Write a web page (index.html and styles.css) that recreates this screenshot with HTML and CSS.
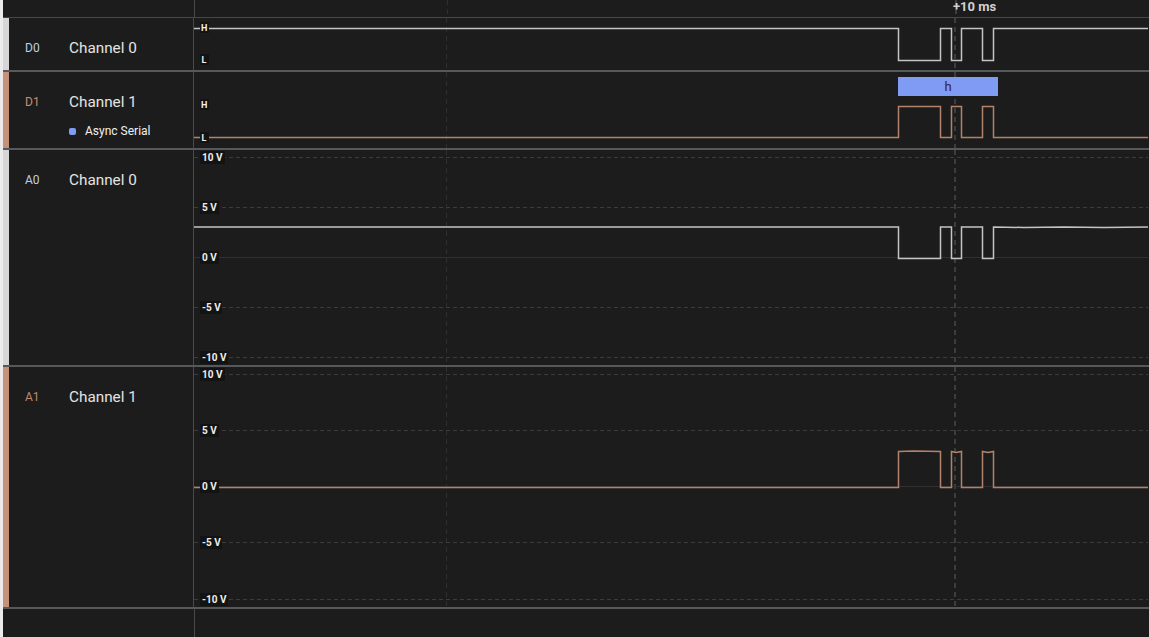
FILE: index.html
```html
<!DOCTYPE html>
<html>
<head>
<meta charset="utf-8">
<link rel="stylesheet" href="styles.css">
</head>
<body>
<div class="app">
  <div class="header">
    <div class="header-left"></div>
    <div class="plot">
      <svg class="svg" width="954" height="17" viewBox="0 0 954 17">
        <line class="vgrid" x1="252.5" y1="0" x2="252.5" y2="17"/>
        <line class="cursor" x1="761" y1="0" x2="761" y2="17"/>
        <text class="timelabel" x="779.5" y="11">+10 ms</text>
      </svg>
    </div>
  </div>

  <div class="row row-d0">
    <div class="accent accent-gray"></div>
    <div class="label">
      <div class="id id-blue">D0</div>
      <div class="names"><div class="name">Channel 0</div></div>
    </div>
    <div class="plot">
      <svg class="svg" width="954" height="52" viewBox="0 0 954 52">
        <line class="vgrid" x1="252.5" y1="0" x2="252.5" y2="52"/>
        <line class="cursor" x1="761" y1="0" x2="761" y2="52"/>
        <polyline class="wave-gray" points="0,10.5 704.5,10.5 704.5,42.5 746.5,42.5 746.5,10.5 757.5,10.5 757.5,42.5 767.5,42.5 767.5,10.5 788.5,10.5 788.5,42.5 799.5,42.5 799.5,10.5 954,10.5"/>
        <rect class="lblbg" x="6" y="4" width="9" height="11"/>
        <text class="hl" x="7" y="13">H</text>
        <rect class="lblbg" x="6" y="36" width="9" height="11"/>
        <text class="hl" x="7.5" y="45">L</text>
      </svg>
    </div>
  </div>

  <div class="row row-d1">
    <div class="accent accent-orange"></div>
    <div class="label">
      <div class="id id-orange">D1</div>
      <div class="names">
        <div class="name">Channel 1</div>
        <div class="analyzer"><span class="dot"></span><span class="analyzer-name">Async Serial</span></div>
      </div>
    </div>
    <div class="plot">
      <svg class="svg" width="954" height="76" viewBox="0 0 954 76">
        <line class="vgrid" x1="252.5" y1="0" x2="252.5" y2="76"/>
        <line class="cursor" x1="761" y1="0" x2="761" y2="76"/>
        <rect class="frame" x="704" y="5" width="100" height="19"/>
        <text class="frame-text" x="754" y="19">h</text>
        <polyline class="wave-orange" points="0,65.5 704.5,65.5 704.5,34.5 746.5,34.5 746.5,65.5 757.5,65.5 757.5,34.5 767.5,34.5 767.5,65.5 788.5,65.5 788.5,34.5 799.5,34.5 799.5,65.5 954,65.5"/>
        <rect class="lblbg" x="6" y="27" width="9" height="11"/>
        <text class="hl" x="7" y="36">H</text>
        <rect class="lblbg" x="6" y="60" width="9" height="11"/>
        <text class="hl" x="7.5" y="69">L</text>
      </svg>
    </div>
  </div>

  <div class="row row-a0">
    <div class="accent accent-gray"></div>
    <div class="label">
      <div class="id id-blue">A0</div>
      <div class="names"><div class="name">Channel 0</div></div>
    </div>
    <div class="plot">
      <svg class="svg" width="954" height="215" viewBox="0 0 954 215">
        <line class="vgrid" x1="252.5" y1="0" x2="252.5" y2="215"/>
        <line class="cursor" x1="761" y1="0" x2="761" y2="215"/>
        <line class="hgrid" x1="0" y1="7.5" x2="954" y2="7.5"/>
        <line class="hgrid" x1="0" y1="57.5" x2="954" y2="57.5"/>
        <line class="zero" x1="0" y1="107.5" x2="954" y2="107.5"/>
        <line class="hgrid" x1="0" y1="157.5" x2="954" y2="157.5"/>
        <line class="hgrid" x1="0" y1="207.5" x2="954" y2="207.5"/>
        <polyline class="wave-gray" points="0,77 704.5,77 704.5,108.5 746.5,108.5 746.5,77 757.5,77 757.5,108.5 767.5,108.5 767.5,77 788.5,77 788.5,108.5 799.5,108.5 799.5,77 830,77.5 870,77 910,77.5 954,77"/>
        <rect class="lblbg" x="6" y="1" width="25" height="13"/>
        <text class="ax" x="8" y="11">10 V</text>
        <rect class="lblbg" x="6" y="51" width="19" height="13"/>
        <text class="ax" x="8" y="61">5 V</text>
        <rect class="lblbg" x="6" y="101" width="19" height="13"/>
        <text class="ax" x="8" y="111">0 V</text>
        <rect class="lblbg" x="6" y="151" width="22" height="13"/>
        <text class="ax" x="8" y="161">-5 V</text>
        <rect class="lblbg" x="6" y="201" width="28" height="13"/>
        <text class="ax" x="8" y="211">-10 V</text>
      </svg>
    </div>
  </div>

  <div class="row row-a1">
    <div class="accent accent-orange"></div>
    <div class="label">
      <div class="id id-orange2">A1</div>
      <div class="names"><div class="name">Channel 1</div></div>
    </div>
    <div class="plot">
      <svg class="svg" width="954" height="240" viewBox="0 0 954 240">
        <line class="vgrid" x1="252.5" y1="0" x2="252.5" y2="240"/>
        <line class="cursor" x1="761" y1="0" x2="761" y2="240"/>
        <line class="hgrid" x1="0" y1="7.5" x2="954" y2="7.5"/>
        <line class="hgrid" x1="0" y1="63.5" x2="954" y2="63.5"/>
        <line class="zero" x1="0" y1="119.5" x2="954" y2="119.5"/>
        <line class="hgrid" x1="0" y1="175.5" x2="954" y2="175.5"/>
        <line class="hgrid" x1="0" y1="232.5" x2="954" y2="232.5"/>
        <polyline class="wave-orange" points="0,120.5 704.5,120.5 704.5,84.5 720,84 746.5,84.5 746.5,120.5 757.5,120.5 757.5,84.5 762,85.5 767.5,84.5 767.5,120.5 788.5,120.5 788.5,84.5 794,85.5 799.5,84.5 799.5,120.5 954,120.5"/>
        <rect class="lblbg" x="6" y="1" width="25" height="13"/>
        <text class="ax" x="8" y="11">10 V</text>
        <rect class="lblbg" x="6" y="57" width="19" height="13"/>
        <text class="ax" x="8" y="67">5 V</text>
        <rect class="lblbg" x="6" y="113" width="19" height="13"/>
        <text class="ax" x="8" y="123">0 V</text>
        <rect class="lblbg" x="6" y="169" width="22" height="13"/>
        <text class="ax" x="8" y="179">-5 V</text>
        <rect class="lblbg" x="6" y="226" width="28" height="13"/>
        <text class="ax" x="8" y="236">-10 V</text>
      </svg>
    </div>
  </div>

  <div class="footer">
    <div class="footer-left"></div>
    <div class="plot"></div>
  </div>
</div>
</body>
</html>
```

FILE: styles.css
```css
html, body {
  margin: 0;
  padding: 0;
  background: #ebebeb;
  overflow: hidden;
}

.app {
  margin-left: 3px;
  height: 637px;
  background: #1c1c1c;
  display: flex;
  flex-direction: column;
  font-family: Roboto, "Liberation Sans", sans-serif;
}

.header {
  height: 17px;
  border-bottom: 1px solid #474747;
  display: flex;
  flex-shrink: 0;
}

.header-left {
  width: 191px;
  border-right: 1px solid #4a4a4a;
}

.plot {
  flex: 1;
  display: flex;
  overflow: hidden;
}

.svg {
  display: block;
}

.row {
  display: flex;
  flex-shrink: 0;
  border-bottom: 2px solid #56595c;
}

.row-d0 { height: 52px; }
.row-d1 { height: 76px; }
.row-a0 { height: 215px; }
.row-a1 { height: 240px; }

.accent {
  width: 6px;
  flex-shrink: 0;
}

.accent-gray { background: #d6d6d6; }
.accent-orange { background: #c4917a; }

.label {
  width: 185px;
  flex-shrink: 0;
  border-right: 1px solid #4a4a4a;
  display: flex;
  align-items: flex-start;
  padding-top: 20px;
  box-sizing: border-box;
}

.id {
  width: 60px;
  flex-shrink: 0;
  box-sizing: border-box;
  padding-left: 16px;
  font-size: 12px;
  line-height: 20px;
}

.id-blue { color: #bdd0ea; }
.id-orange { color: #cc8c70; }
.id-orange2 { color: #bf8870; }

.names {
  display: flex;
  flex-direction: column;
}

.name {
  font-size: 15.3px;
  line-height: 20px;
  color: #e3e3e3;
}

.analyzer {
  display: flex;
  align-items: center;
  margin-top: 11px;
  height: 16px;
}

.dot {
  width: 7px;
  height: 7px;
  border-radius: 2px;
  background: #7f9cf5;
  margin-right: 9px;
}

.analyzer-name {
  font-size: 12px;
  line-height: 16px;
  color: #f1f1f1;
}

.footer {
  flex: 1;
  display: flex;
}

.footer-left {
  width: 191px;
  border-right: 1px solid #4a4a4a;
}

/* svg parts */
.vgrid {
  stroke: #2f2f2f;
  stroke-width: 1;
  stroke-dasharray: 5 4;
}

.cursor {
  stroke: #3d3d3d;
  stroke-width: 2;
  stroke-dasharray: 5 4;
}

.hgrid {
  stroke: #3c3c3c;
  stroke-width: 1;
  stroke-dasharray: 4 3;
}

.zero {
  stroke: #303030;
  stroke-width: 1;
}

.wave-gray {
  fill: none;
  stroke: #c4c4c4;
  stroke-width: 1.5;
}

.wave-orange {
  fill: none;
  stroke: #b3826b;
  stroke-width: 1.5;
}

.lblbg {
  fill: #131313;
}

.hl {
  font-family: Roboto, "Liberation Sans", sans-serif;
  font-size: 9px;
  font-weight: 700;
  fill: #f0f0f0;
}

.ax {
  font-family: Roboto, "Liberation Sans", sans-serif;
  font-size: 10px;
  font-weight: 700;
  fill: #eeeeee;
}

.timelabel {
  font-family: Roboto, "Liberation Sans", sans-serif;
  font-size: 13px;
  font-weight: 700;
  fill: #d2d2d2;
  text-anchor: middle;
}

.frame {
  fill: #7f9bf3;
}

.frame-text {
  font-family: Roboto, "Liberation Sans", sans-serif;
  font-size: 13px;
  fill: #3e1c30;
  text-anchor: middle;
}
```
